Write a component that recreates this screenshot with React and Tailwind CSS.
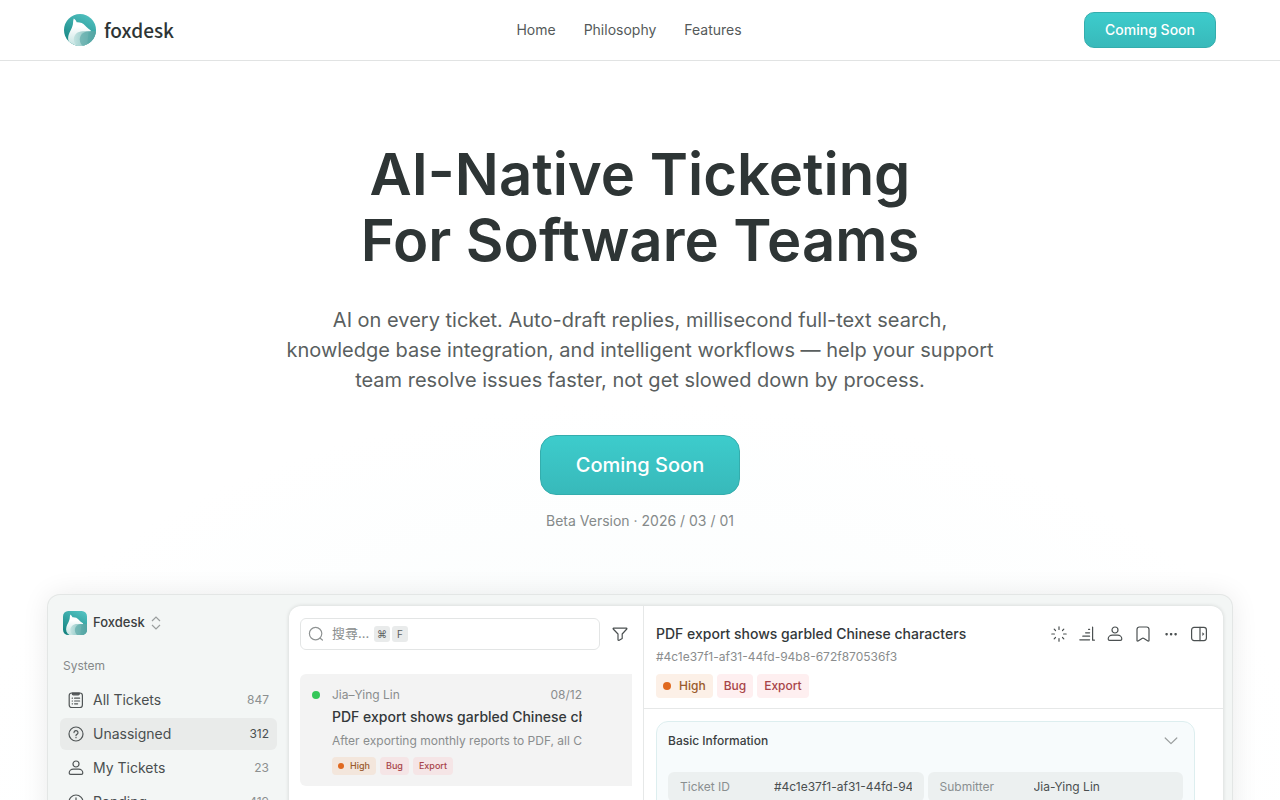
import React, { useId } from "react";
import clsx from "clsx";

const NAV_LINKS = ["Home", "Philosophy", "Features"];

const FOLDERS = [
  { label: "All Tickets", count: 847, icon: "clipboard" },
  { label: "Unassigned", count: 312, icon: "question", active: true },
  { label: "My Tickets", count: 23, icon: "person" },
  { label: "Pending", count: 419, icon: "clock" },
];

const ACTIONS = [
  { label: "Status", icon: "loader" },
  { label: "Priority", icon: "priority" },
  { label: "Assignee", icon: "person" },
  { label: "Bookmark", icon: "bookmark" },
  { label: "More", icon: "more" },
  { label: "Toggle side panel", icon: "panel" },
];

const ICONS = {
  clipboard: (
    <>
      <rect x="1.2" y="1" width="13.2" height="14.6" rx="2.5" />
      <path d="M4.300 1h7v.8a1 1 0 0 1-1 1h-5a1 1 0 0 1-1-1z" fill="currentColor" />
      <path d="M4.200 6.200h.3M6.600 6.200h5M4.200 9h.3M6.600 9h5M4.200 11.800h.3M6.600 11.800h3" />
    </>
  ),
  question: (
    <>
      <circle cx="8" cy="8" r="7" />
      <path d="M6 6.600a2 2 0 1 1 2.900 1.800c-.6.3-.9.6-.9 1.200" />
      <path d="M8 11.300v.4" />
    </>
  ),
  person: (
    <>
      <circle cx="8" cy="4" r="3" />
      <path d="M1.200 13c0-2.200 2-3.800 4.200-3.800h5.200c2.200 0 4.200 1.600 4.200 3.800 0 .8-.6 1.400-1.400 1.400H2.600c-.8 0-1.400-.6-1.400-1.400z" />
    </>
  ),
  clock: (
    <>
      <circle cx="8" cy="8" r="7" />
      <path d="M8 3.800V8l2.400 2" />
    </>
  ),
  search: (
    <>
      <circle cx="7.600" cy="7.600" r="6.200" />
      <path d="m12.200 12.200 2.200 1.800" />
    </>
  ),
  filter: (
    <path d="M1.600 2.200h12.800c.5 0 .7.4.4.8L10.200 8v4.600l-3 1.700c-.6.3-1.200 0-1.200-.6V8L1.200 3c-.3-.4-.1-.8.4-.8z" />
  ),
  loader: (
    <path d="M8 .8v2.600M8 12.600v2.600M.8 8h2.600M12.600 8h2.600M3.200 3.200l1.300 1.300M11.500 11.500l1.300 1.300M12.800 3.200l-1.300 1.300M4.500 11.500l-1.300 1.300" />
  ),
  priority: <path d="M13.600 1v13.200M15.400 14.200h-1.800M9.600 3.400h1M6.600 6.800h4M3.800 10.200h6.800M.8 13.800h9.800" />,
  bookmark: (
    <path d="M2 3.400c0-1.600.9-2.400 2.400-2.400h7.200c1.500 0 2.400.8 2.400 2.400v11c0 .7-.6.9-1.100.5l-3.900-2.500c-.6-.4-1.400-.4-2 0l-3.900 2.500c-.5.4-1.100.2-1.100-.5z" />
  ),
  more: (
    <g fill="currentColor" stroke="none">
      <rect x="2.400" y="7" width="2.400" height="2.400" rx=".8" />
      <rect x="6.900" y="7" width="2.400" height="2.400" rx=".8" />
      <rect x="11.400" y="7" width="2.400" height="2.400" rx=".8" />
    </g>
  ),
  panel: (
    <>
      <rect x=".6" y="1.400" width="14.800" height="13.200" rx="2.500" />
      <path d="M9 1.400v13.200" />
      <path d="M11.400 6.200v3.800l2-1.900z" fill="currentColor" stroke="none" />
    </>
  ),
  chevron: <path d="m2.200 5 5.800 5.600L13.800 5" />,
};

const Icon = ({ name, className }) => (
  <svg
    viewBox="0 0 16 16"
    fill="none"
    stroke="currentColor"
    strokeWidth="1.2"
    strokeLinecap="round"
    strokeLinejoin="round"
    aria-hidden="true"
    className={clsx("h-4 w-4 shrink-0", className)}
  >
    {ICONS[name]}
  </svg>
);

// Fox mark: round in the header, rounded square inside the app
const FoxMark = ({ radius = 16, className }) => {
  const id = useId();
  return (
    <svg viewBox="0 0 32 32" aria-hidden="true" className={clsx("shrink-0", className)}>
      <defs>
        <linearGradient id={`${id}bg`} x1="0.7" y1="0" x2="0.2" y2="1">
          <stop offset="0" stopColor="#4fbfbe" />
          <stop offset="1" stopColor="#12827f" />
        </linearGradient>
        <linearGradient id={`${id}body`} x1="0" y1="0" x2="0" y2="1">
          <stop offset="0.3" stopColor="#ffffff" />
          <stop offset="1" stopColor="#c3e3e1" />
        </linearGradient>
        <linearGradient id={`${id}tail`} x1="0" y1="0" x2="1" y2="0">
          <stop offset="0" stopColor="#bfe1df" />
          <stop offset="1" stopColor="#5aa9a7" />
        </linearGradient>
        <clipPath id={`${id}clip`}>
          <rect width="32" height="32" rx={radius} />
        </clipPath>
      </defs>
      <g clipPath={`url(#${id}clip)`}>
        <rect width="32" height="32" fill={`url(#${id}bg)`} />
        <path
          d="M9.800 4.500c1.300.9 2.200 2.200 2.900 3.700 3.300-.2 6.300.8 8.300 3.300 1.500 1.900 3.600 3.200 5.700 4.800.5 1.300-.6 2-2.200 2.100L23 32H8.500C4.600 29.500 3.300 25.500 4.600 21c1-3.500 3.500-6.300 4.200-10.200.4-2.200.2-4.300 1-6.300z"
          fill={`url(#${id}body)`}
        />
        <path
          d="M32 17.200H19.500c-5.500-.4-9.700 3.300-9.700 8 0 2.900 1.400 5.300 3.600 6.800H32z"
          fill={`url(#${id}tail)`}
          opacity=".85"
        />
        <path
          d="M32 17.200h-7c-5.600 0-9.200 3.600-9.200 8.200 0 2.600 1.200 5 3 6.600H32z"
          fill="#4ea3a1"
          opacity=".55"
        />
      </g>
    </svg>
  );
};

const Tag = ({ children, tone = "red", dot = false, small = false }) => (
  <span
    className={clsx(
      "flex items-center font-medium",
      small ? "h-[18px] gap-1.5 rounded px-1.5 text-[9px]" : "h-6 gap-2 rounded px-[7px] text-xs",
      tone === "orange" && (small ? "bg-[#f3e6dc] text-[#9a5a2c]" : "bg-[#fcf0e7] text-[#9a5a2c]"),
      tone === "red" && (small ? "bg-[#f5e5e6] text-[#a84448]" : "bg-[#feeff0] text-[#a84448]")
    )}
  >
    {dot && <span className={clsx("rounded-full bg-[#e0691f]", small ? "h-1.5 w-1.5" : "h-2 w-2")} />}
    {children}
  </span>
);

const Tags = ({ small }) => (
  <div className="flex gap-1">
    <Tag tone="orange" dot small={small}>High</Tag>
    <Tag small={small}>Bug</Tag>
    <Tag small={small}>Export</Tag>
  </div>
);

const Key = ({ children }) => (
  <kbd className="flex h-4 w-4 items-center justify-center rounded-[3px] bg-[#e9ebeb] font-['Inter','DejaVu_Sans',sans-serif] text-[10px] text-[#5c6060]">
    {children}
  </kbd>
);

const Header = () => (
  <header className="relative z-10 flex h-[61px] items-center justify-between border-b border-[#e1e3e3] bg-white px-16">
    <a href="#home" className="flex items-center gap-2">
      <FoxMark className="h-8 w-8" />
      <span className="font-['Noto_Sans_CJK_SC',sans-serif] text-[19px] leading-8 font-medium text-[#2e3535]">
        foxdesk
      </span>
    </a>
    <nav className="flex gap-7">
      {NAV_LINKS.map((label) => (
        <a key={label} href={`#${label.toLowerCase()}`} className="text-sm text-[#555a5a]">
          {label}
        </a>
      ))}
    </nav>
    <button
      type="button"
      className="h-9 rounded-[10px] border border-[#34adad] bg-linear-to-b from-[#3dcccc] to-[#38b9ba] px-5 text-sm font-medium text-white"
    >
      Coming Soon
    </button>
  </header>
);

const Sidebar = () => (
  <aside className="w-[241px] shrink-0 px-3 pt-[5px]">
    <button type="button" className="flex h-6 items-center gap-1.5 px-[3px]">
      <FoxMark radius={7} className="h-6 w-6" />
      <span className="text-[13px] font-medium text-[#3b4041]">Foxdesk</span>
      <svg viewBox="0 0 10 14" className="h-3.5 w-2.5" fill="none" stroke="#9a9e9e" strokeWidth="1.2" aria-hidden="true">
        <path d="m1 5 4-4 4 4M1 9l4 4 4-4" />
      </svg>
    </button>
    <h2 className="mt-[21px] px-[3px] text-xs leading-5 text-[#858989]">System</h2>
    <ul className="mt-2 flex flex-col gap-0.5">
      {FOLDERS.map((f) => (
        <li key={f.label}>
          <a
            href="#tickets"
            className={clsx(
              "flex h-8 items-center gap-[9px] rounded-md px-2 text-sm text-[#4a4f50]",
              f.active && "bg-[#e9ebea]"
            )}
          >
            <Icon name={f.icon} className="text-[#505556]" />
            <span>{f.label}</span>
            <span className={clsx("ml-auto text-xs", f.active ? "text-[#4a4f50]" : "text-[#8c9090]")}>
              {f.count}
            </span>
          </a>
        </li>
      ))}
    </ul>
  </aside>
);

const TicketList = () => (
  <section className="w-[355px] shrink-0 border-r border-[#e6e8e8] pt-3 pl-[11px]">
    <div className="flex items-center gap-3 pr-[15px]">
      <label className="flex h-8 flex-1 items-center rounded-md border border-[#e3e5e5] px-[7px]">
        <Icon name="search" className="mr-2 text-[#8f9393]" />
        <input
          type="text"
          aria-label="搜尋"
          placeholder="搜尋..."
          className="mr-0.5 w-10 font-['Inter','Noto_Sans_CJK_TC',sans-serif] text-[13px] outline-none placeholder:text-[#8a8e8e]"
        />
        <span className="flex gap-0.5">
          <Key>⌘</Key>
          <Key>F</Key>
        </span>
      </label>
      <button type="button" aria-label="Filter" className="text-[#4b5051]">
        <Icon name="filter" />
      </button>
    </div>
    <article className="mt-6 mr-[11px] flex h-28 gap-3 rounded-l-md bg-[#f3f3f3] pt-[11px] pr-[50px] pl-3">
      <span className="mt-1.5 h-2 w-2 shrink-0 rounded-full bg-[#35c759]" />
      <div className="min-w-0 flex-1">
        <div className="flex justify-between text-xs leading-5 text-[#8a8d8e]">
          <span>Jia–Ying Lin</span>
          <span>08/12</span>
        </div>
        <h3 className="overflow-hidden text-sm leading-6 font-medium whitespace-nowrap text-[#33383a]">
          PDF export shows garbled Chinese characters
        </h3>
        <p className="mb-1 overflow-hidden text-xs leading-6 whitespace-nowrap text-[#8a8d8e]">
          After exporting monthly reports to PDF, all Chinese text
        </p>
        <Tags small />
      </div>
    </article>
  </section>
);

const Field = ({ label, value }) => (
  <div className="flex h-[30px] min-w-0 flex-1 items-center rounded-md bg-[#ecf0f0] px-3 text-xs">
    <dt className="w-[94px] shrink-0 text-[#8a8f90]">{label}</dt>
    <dd className="overflow-hidden whitespace-nowrap text-[#4a4f50]">{value}</dd>
  </div>
);

const TicketDetail = () => (
  <section className="min-w-0 flex-1">
    <div className="flex items-start justify-between border-b border-[#e6e8e8] pt-4 pr-4 pb-2.5 pl-3">
      <div>
        <h3 className="text-sm leading-6 font-medium text-[#33383a]">PDF export shows garbled Chinese characters</h3>
        <p className="mb-1.5 text-xs leading-[22px] text-[#8a8d8e]">#4c1e37f1-af31-44fd-94b8-672f870536f3</p>
        <Tags />
      </div>
      <div className="flex gap-3 pt-1">
        {ACTIONS.map((a) => (
          <button key={a.label} type="button" aria-label={a.label} className="text-[#4b5051]">
            <Icon name={a.icon} />
          </button>
        ))}
      </div>
    </div>
    <div className="mt-3 mr-7 ml-3 rounded-xl border border-[#ddeeef] bg-[#f7fbfc] px-[11px] pb-6">
      <div className="flex h-[38px] items-center justify-between pr-1">
        <h4 className="text-xs font-medium text-[#3b4041]">Basic Information</h4>
        <button type="button" aria-label="Collapse" className="text-[#9a9e9e]">
          <Icon name="chevron" />
        </button>
      </div>
      <dl className="mt-3 flex gap-1">
        <Field label="Ticket ID" value="#4c1e37f1-af31-44fd-94b8" />
        <Field label="Submitter" value="Jia-Ying Lin" />
      </dl>
    </div>
  </section>
);

export default function App() {
  return (
    <div className="h-screen overflow-hidden bg-white font-['Inter','Noto_Sans_CJK_TC',sans-serif]">
      <Header />
      <main className="bg-[radial-gradient(ellipse_680px_400px_at_50%_740px,#f8fcfc,#ffffff)] pt-20">
        <div className="flex flex-col items-center px-6 text-center">
          <h1 className="text-[58px] leading-[66px] font-semibold text-[#2e3535]">
            AI-Native Ticketing
            <br />
            For Software Teams
          </h1>
          <p className="mt-8 max-w-[720px] text-xl leading-[30px] text-[#5a5f5f]">
            AI on every ticket. Auto-draft replies, millisecond full-text search, knowledge base integration, and
            intelligent workflows — help your support team resolve issues faster, not get slowed down by process.
          </p>
          <button
            type="button"
            className="mt-10 h-[60px] rounded-2xl border border-[#34adad] bg-linear-to-b from-[#3dcccc] to-[#38b9ba] px-[35px] text-xl font-medium text-white"
          >
            Coming Soon
          </button>
          <p className="mt-4 text-sm text-[#858a8a]">Beta Version · 2026 / 03 / 01</p>
        </div>

        <div className="mt-16 px-12">
          <div className="flex rounded-xl bg-[#f3f6f5] pt-[11px] pr-[9px] shadow-[0_0_28px_rgba(0,0,0,0.09)] ring-1 ring-[#e3e6e5]">
            <Sidebar />
            <div className="flex min-h-[400px] min-w-0 flex-1 overflow-hidden rounded-t-xl bg-white shadow-[0_0_4px_rgba(0,0,0,0.14)]">
              <TicketList />
              <TicketDetail />
            </div>
          </div>
        </div>
      </main>
    </div>
  );
}
